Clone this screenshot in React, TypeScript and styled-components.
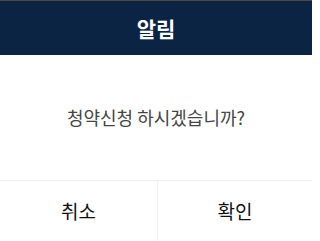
import React from 'react';
import styled, { createGlobalStyle } from 'styled-components';

const GlobalStyle = createGlobalStyle`
  html, body {
    margin: 0;
    padding: 0;
    background: #ffffff;
  }
  body {
    font-family: "Noto Sans CJK KR", "Noto Sans", sans-serif;
  }
`;

const Dialog = styled.div`
  width: 312px;
  height: 241px;
  display: flex;
  flex-direction: column;
  background: #ffffff;
  border-top: 1px solid #4a4a4a;
  box-sizing: border-box;
`;

const Header = styled.div`
  height: 54px;
  display: flex;
  align-items: center;
  justify-content: center;
  background: #0b2443;
  color: #ffffff;
  font-size: 21px;
  font-weight: 700;
`;

const Body = styled.div`
  flex: 1;
  display: flex;
  align-items: center;
  justify-content: center;
  padding-bottom: 2px;
  color: #444444;
  font-size: 18px;
  border-bottom: 1px solid #eeeeee;
`;

const Actions = styled.div`
  height: 60px;
  display: grid;
  grid-template-columns: 157px 1fr;
`;

const ActionButton = styled.button<{ $divider?: boolean }>`
  border: none;
  border-left: ${p => (p.$divider ? '1px solid #eeeeee' : 'none')};
  background: #ffffff;
  color: #111111;
  font-family: inherit;
  font-size: 19px;
  padding: 0 0 2px;
  cursor: pointer;
`;

const App: React.FC = () => (
  <>
    <GlobalStyle />
    <Dialog>
      <Header>알림</Header>
      <Body>청약신청 하시겠습니까?</Body>
      <Actions>
        <ActionButton>취소</ActionButton>
        <ActionButton $divider>확인</ActionButton>
      </Actions>
    </Dialog>
  </>
);

export default App;
